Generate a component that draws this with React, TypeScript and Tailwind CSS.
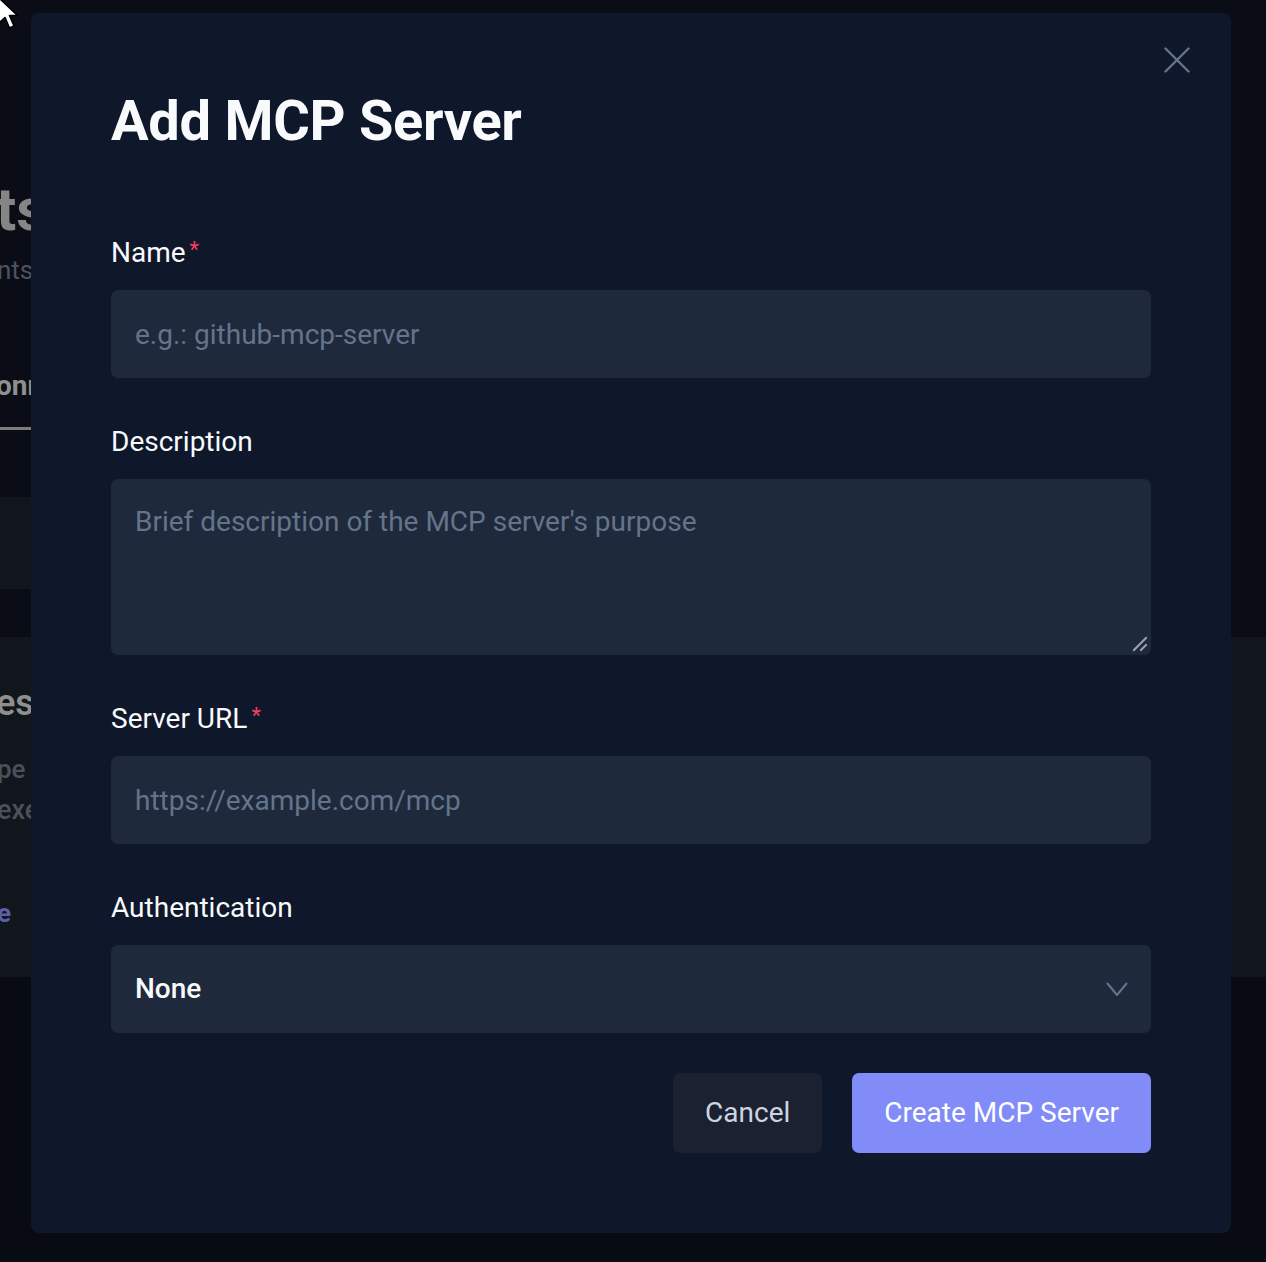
import React from "react";

function CloseIcon() {
  return (
    <svg width="26" height="26" viewBox="0 0 26 26" fill="none" stroke="#64748b" strokeWidth="2.4" strokeLinecap="round">
      <line x1="1.5" y1="1.5" x2="24.5" y2="24.5" />
      <line x1="24.5" y1="1.5" x2="1.5" y2="24.5" />
    </svg>
  );
}

function Chevron() {
  return (
    <svg width="22" height="15" viewBox="0 0 22 15" fill="none" stroke="#64748b" strokeWidth="2" strokeLinecap="round" strokeLinejoin="round">
      <polyline points="1.5,1.5 11,13 20.5,1.5" />
    </svg>
  );
}

function ResizeGrip() {
  return (
    <svg width="16" height="16" viewBox="0 0 16 16" fill="none" stroke="#9ca3af" strokeWidth="2" strokeLinecap="square">
      <line x1="2" y1="14" x2="14" y2="2" />
      <line x1="9" y1="14" x2="14" y2="9" />
    </svg>
  );
}

function Pointer() {
  return (
    <svg width="24" height="36" viewBox="0 0 24 36">
      <path
        d="M2 1 L2 26 L8 20.5 L12.5 31 L17 29 L12.5 18.5 L20.5 18.5 Z"
        fill="#ffffff"
        stroke="#000000"
        strokeWidth="1.6"
        strokeLinejoin="round"
      />
    </svg>
  );
}

function Label({ text, required }: { text: string; required?: boolean }) {
  return (
    <div className="mb-[17px] flex items-start">
      <span className="text-[28px] leading-[40px] text-[#f8fafc]">{text}</span>
      {required && <span className="ml-[4px] text-[22px] leading-[34px] text-[#f43f5e]">*</span>}
    </div>
  );
}

export default function App() {
  return (
    <div className="relative h-[1262px] w-full overflow-hidden bg-[#0a0d15] font-['Roboto',sans-serif]">
      {/* page under the dialog */}
      <div className="flex h-full flex-col">
        <div className="flex h-[497px] flex-col">
          <div className="mt-[180px] -ml-[4px] text-[60px] font-bold leading-[60px] text-[#858585]">ts</div>
          <div className="mt-[14px] -ml-[3px] text-[26px] leading-[32px] text-[#4c5260]">nts</div>
          <div className="mt-[84px] -ml-[4px] text-[28px] font-bold leading-[32px] text-[#8f8f8f]">onn</div>
          <div className="mt-[25px] h-[3px] w-[200px] bg-[#7c7c7c]" />
        </div>
        <div className="h-[92px] w-[600px] bg-[#11151c]" />
        <div className="h-[48px]" />
        <div className="flex h-[340px] flex-col bg-[#11151c]">
          <div className="mt-[46px] -ml-[4px] text-[36px] font-semibold leading-[40px] text-[#8f8f8f]">es</div>
          <div className="mt-[26px] -ml-[3px] text-[26px] font-medium leading-[40px] text-[#4b505b]">pe l</div>
          <div className="mt-[1px] -ml-[3px] text-[27px] font-medium leading-[40px] text-[#4b505b]">exe</div>
          <div className="mt-[63px] -ml-[3px] text-[26px] font-bold leading-[40px] text-[#5a60a8]">e</div>
        </div>
        <div className="flex-1 bg-[#080b12]" />
      </div>

      {/* dialog layer */}
      <div className="absolute inset-0 pl-[31px] pt-[13px]">
        <div className="relative flex h-[1220px] w-[1200px] flex-col rounded-[8px] bg-[#0f172a] px-[80px] pt-[78px]">
          <button className="absolute right-[41px] top-[34px]">
            <CloseIcon />
          </button>

          <h2 className="text-[56px] font-bold leading-[60px] tracking-[-0.3px] text-[#f8fafc]">Add MCP Server</h2>

          <div className="mt-[82px] flex flex-col">
            <Label text="Name" required />
            <input
              className="h-[88px] w-full rounded-[7px] bg-[#1e293b] px-[24px] text-[28px] text-[#f8fafc] outline-none placeholder:text-[#64748b]"
              placeholder="e.g.: github-mcp-server"
            />
          </div>

          <div className="mt-[44px] flex flex-col">
            <Label text="Description" />
            <div className="relative">
              <textarea
                className="block h-[176px] w-full resize-none rounded-[7px] bg-[#1e293b] px-[24px] pt-[23px] text-[28px] leading-[40px] text-[#f8fafc] outline-none placeholder:text-[#64748b]"
                placeholder="Brief description of the MCP server's purpose"
              />
              <div className="pointer-events-none absolute bottom-[3px] right-[3px]">
                <ResizeGrip />
              </div>
            </div>
          </div>

          <div className="mt-[44px] flex flex-col">
            <Label text="Server URL" required />
            <input
              className="h-[88px] w-full rounded-[7px] bg-[#1e293b] px-[24px] text-[28px] text-[#f8fafc] outline-none placeholder:text-[#64748b]"
              placeholder="https://example.com/mcp"
            />
          </div>

          <div className="mt-[44px] flex flex-col">
            <Label text="Authentication" />
            <div className="flex h-[88px] w-full items-center justify-between rounded-[7px] bg-[#1e293b] pl-[24px] pr-[23px]">
              <span className="text-[28px] font-medium text-[#f8fafc]">None</span>
              <Chevron />
            </div>
          </div>

          <div className="mt-[40px] flex justify-end gap-[30px]">
            <button className="h-[80px] rounded-[7px] bg-[#1b2130] px-[32px] text-[28px] text-[#cbd5e1]">Cancel</button>
            <button className="h-[80px] rounded-[7px] bg-[#818cf8] px-[32px] text-[28px] text-white">Create MCP Server</button>
          </div>
        </div>
      </div>

      {/* mouse pointer */}
      <div className="absolute -left-[3px] -top-[3px]">
        <Pointer />
      </div>
    </div>
  );
}
